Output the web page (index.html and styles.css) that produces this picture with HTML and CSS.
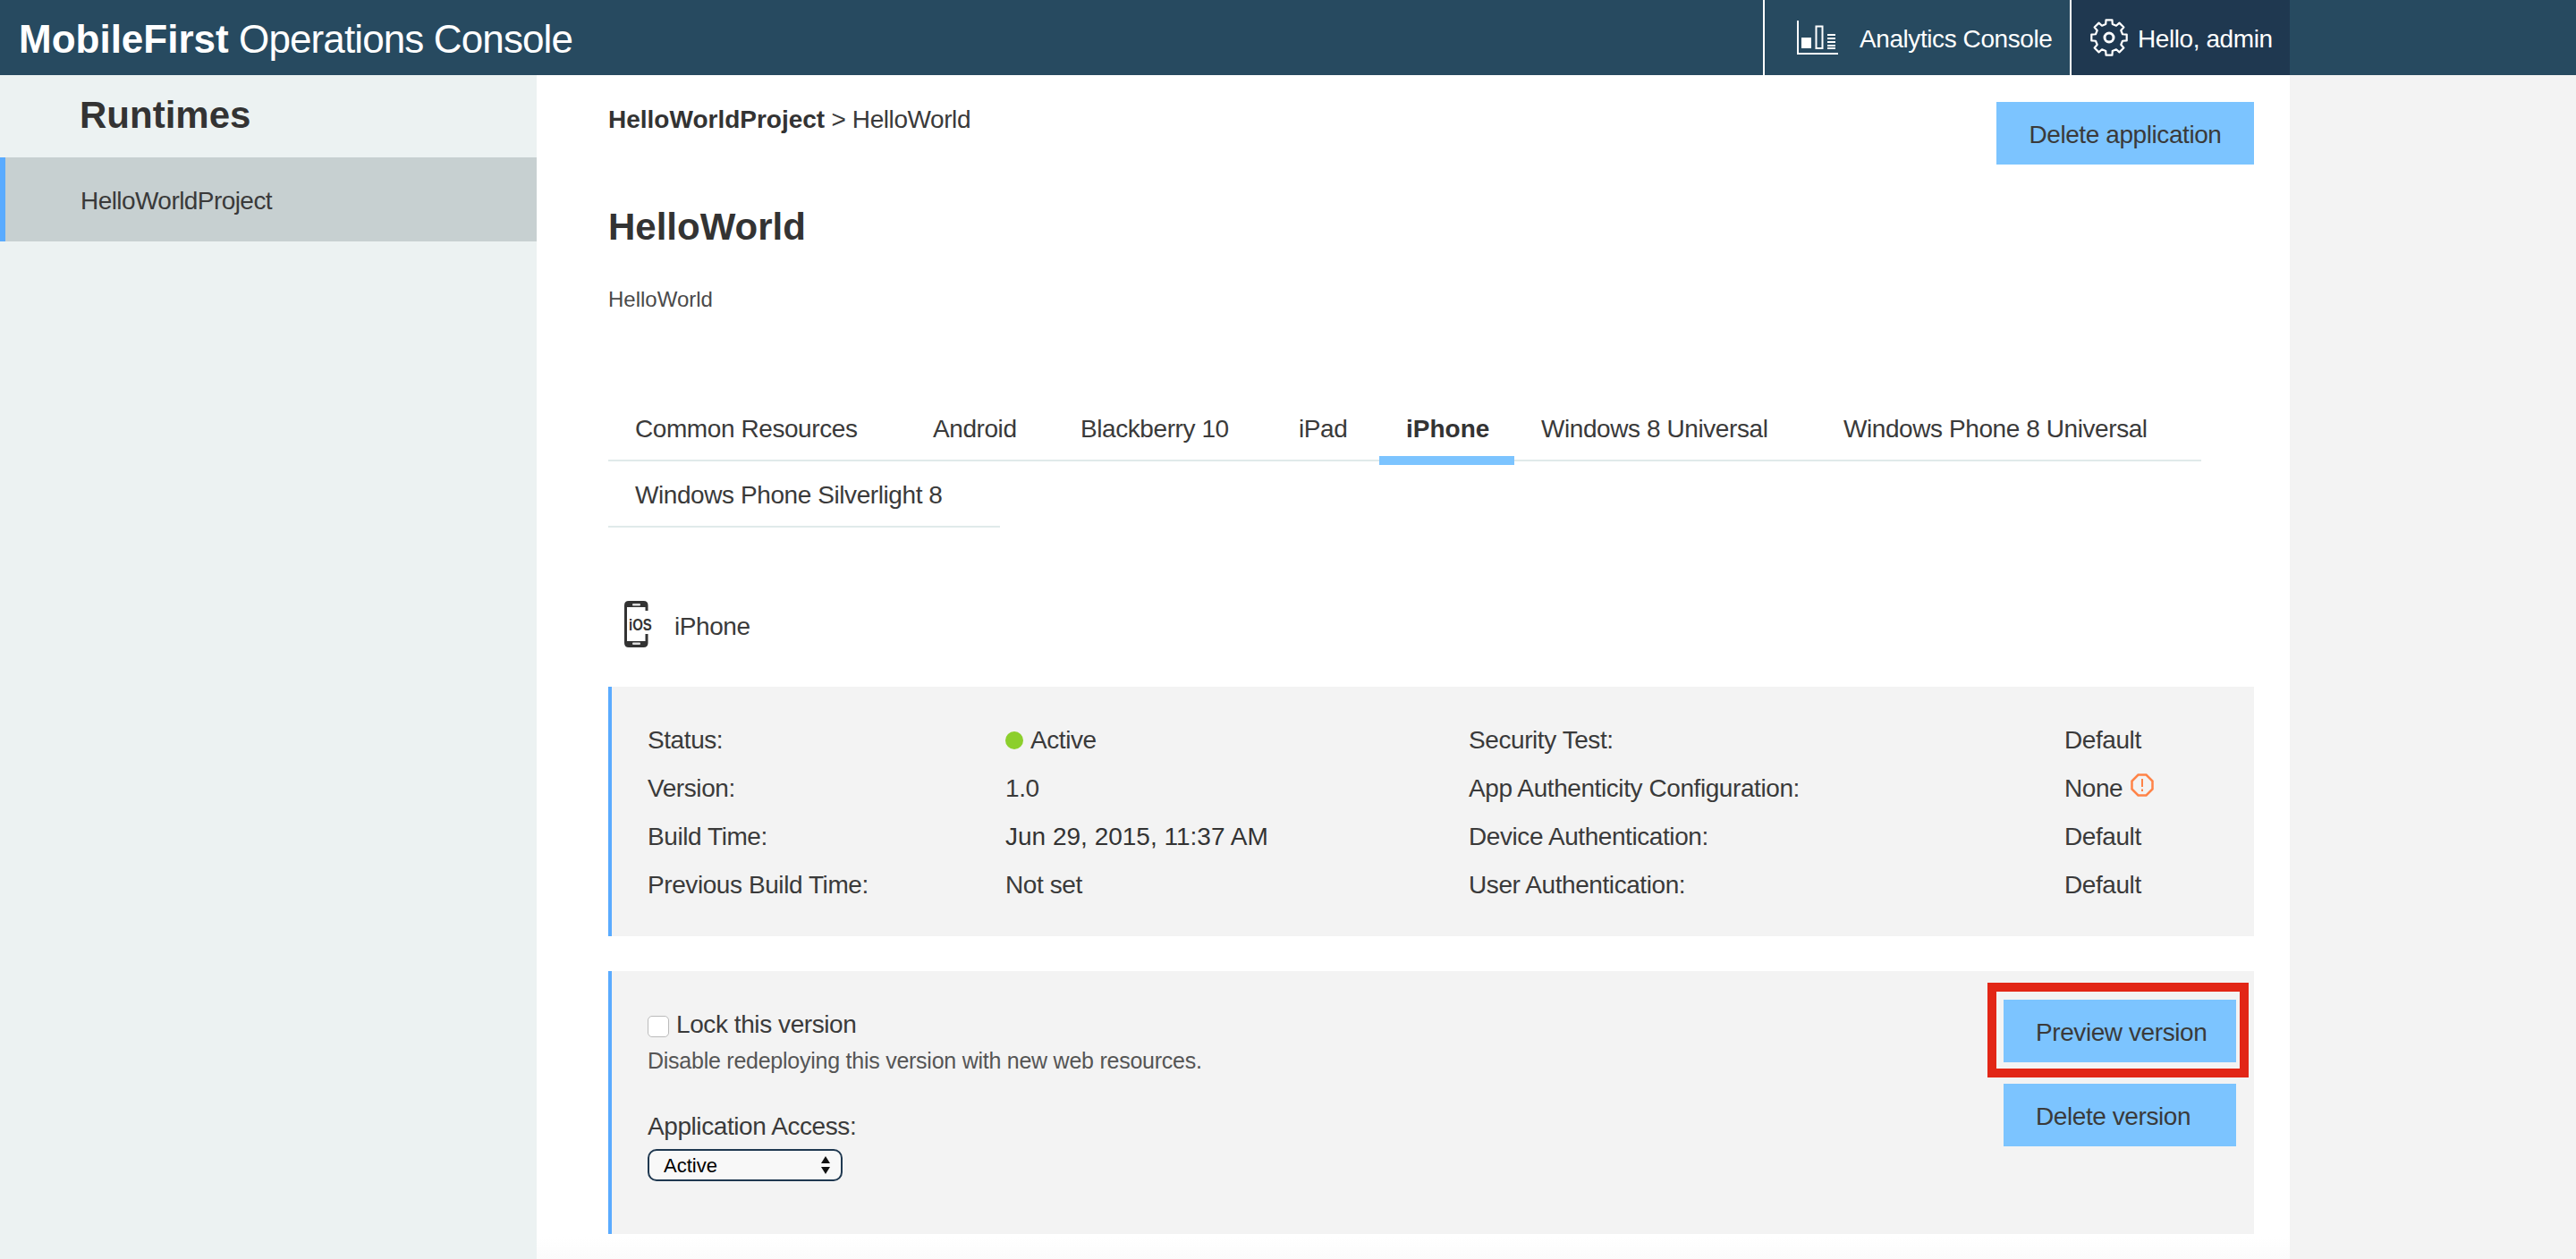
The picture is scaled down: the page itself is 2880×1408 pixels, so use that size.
FILE: index.html
```html
<!DOCTYPE html>
<html>
    <head>
        <title>MobileFirst Operations Console</title>
        <link rel="stylesheet" href="styles.css">
    </head>
    <body>
        <header class="topBar">
            <div class="brand"><b>MobileFirst</b> Operations Console</div>
            <a class="navItem analytics">
                <svg class="analyticsIcon" viewBox="0 0 46 38">
                    <path d="M1 0V37H46" fill="none" stroke="#fff" stroke-width="2"/>
                    <rect x="5" y="19" width="11" height="12" fill="#fff"/>
                    <rect x="21.500" y="6.500" width="7" height="24.500" fill="none" stroke="#fff" stroke-width="2"/>
                    <path d="M34 16H43M34 20H43M34 24H43M34 28H43M34 31H43" stroke="#fff" stroke-width="2"/>
                </svg>
                <span>Analytics Console</span>
            </a>
            <a class="navItem user">
                <svg class="gearIcon" viewBox="0 0 44 42">
                    <polygon fill="none" stroke="#fff" stroke-width="2.200" stroke-linejoin="round" points="18.25,5.96 18.53,1.3 25.47,1.3 25.75,5.96 29.98,7.71 33.47,4.62 38.38,9.53 35.29,13.02 37.04,17.25 41.7,17.53 41.7,24.47 37.04,24.75 35.29,28.98 38.38,32.47 33.47,37.38 29.98,34.29 25.75,36.04 25.47,40.7 18.53,40.7 18.25,36.04 14.02,34.29 10.53,37.38 5.62,32.47 8.71,28.98 6.96,24.75 2.3,24.47 2.3,17.53 6.96,17.25 8.71,13.02 5.62,9.53 10.53,4.62 14.02,7.71"/>
                    <circle cx="22" cy="21" r="5" fill="none" stroke="#fff" stroke-width="3"/>
                </svg>
                <span>Hello, admin</span>
            </a>
        </header>
        <div class="page">
            <aside class="sidebar">
                <h2>Runtimes</h2>
                <div class="sideItem">HelloWorldProject</div>
            </aside>
            <main class="content">
                <div class="crumbRow">
                    <div class="crumbs"><b>HelloWorldProject</b> &gt; HelloWorld</div>
                    <button class="btn deleteApp">Delete application</button>
                </div>
                <h1>HelloWorld</h1>
                <div class="subtitle">HelloWorld</div>

                <div class="tabs firstRow">
                    <div class="tab">Common Resources</div>
                    <div class="tab">Android</div>
                    <div class="tab">Blackberry 10</div>
                    <div class="tab">iPad</div>
                    <div class="tab active">iPhone</div>
                    <div class="tab">Windows 8 Universal</div>
                    <div class="tab">Windows Phone 8 Universal</div>
                </div>
                <div class="tabs secondRow">
                    <div class="tab">Windows Phone Silverlight 8</div>
                </div>

                <div class="platform">
                    <svg class="phoneIcon" viewBox="0 0 33 52">
                        <path d="M25 11V5Q25 1.500 21.500 1.500H5Q1.500 1.500 1.500 5V47Q1.500 50.500 5 50.500H21.500Q25 50.500 25 47V37" fill="none" stroke="#333" stroke-width="3"/>
                        <path d="M2 2H25V7H2ZM2 45H25V50H2Z" fill="#333"/>
                        <rect x="9" y="3" width="9" height="2.500" rx="1" fill="#ddd"/>
                        <rect x="9" y="46.500" width="9" height="2.500" rx="1" fill="#ddd"/>
                        <text class="iosText" x="5" y="27.500" transform="scale(1 1.200)">iOS</text>
                    </svg>
                    <span>iPhone</span>
                </div>

                <section class="panel info">
                    <div>Status:</div>
                    <div class="status"><i class="dot"></i>Active</div>
                    <div>Security Test:</div>
                    <div>Default</div>

                    <div>Version:</div>
                    <div>1.0</div>
                    <div>App Authenticity Configuration:</div>
                    <div class="none">None
                        <svg class="warnIcon" viewBox="0 0 26 26">
                            <polygon points="8.500,1.500 17.500,1.500 24.500,8.500 24.500,17.500 17.500,24.500 8.500,24.500 1.500,17.500 1.500,8.500" fill="none" stroke="#ff8347" stroke-width="2.500"/>
                            <path d="M13 6V15M13 17.500V20" stroke="#ff8347" stroke-width="2"/>
                        </svg>
                    </div>

                    <div>Build Time:</div>
                    <div class="date">Jun 29, 2015, 11:37 AM</div>
                    <div>Device Authentication:</div>
                    <div>Default</div>

                    <div>Previous Build Time:</div>
                    <div>Not set</div>
                    <div>User Authentication:</div>
                    <div>Default</div>
                </section>

                <section class="panel version">
                    <div class="versionForm">
                        <label class="lockRow"><input type="checkbox">Lock this version</label>
                        <div class="help">Disable redeploying this version with new web resources.</div>
                        <div class="accessLabel">Application Access:</div>
                        <div class="selectWrap">
                            <select>
                                <option>Active</option>
                            </select>
                        </div>
                    </div>
                    <div class="versionBtns">
                        <button class="btn">Preview version</button>
                        <button class="btn">Delete version</button>
                    </div>
                    <div class="highlight"></div>
                </section>
            </main>
            <div class="gutter"></div>
        </div>
    </body>
</html>
```

FILE: styles.css
```css
html {
    overflow: hidden;
}

body {
    margin: 0;
    height: 1408px;
    overflow: hidden;
    font-family: "Liberation Sans", Arial, sans-serif;
    font-size: 28px;
    line-height: 40px;
    letter-spacing: -0.015em;
    color: #3a3a3a;
    background-color: #fff;
}

b,
h1,
h2,
.tab.active,
.date {
    letter-spacing: 0;
    color: #333;
}

/* top bar */
.topBar {
    display: flex;
    align-items: stretch;
    height: 84px;
    padding-right: 320px;
    background-color: #274a60;
    color: #fff;
}

.brand {
    flex: 1;
    padding-left: 21px;
    font-size: 44px;
    line-height: 88px;
    letter-spacing: -0.02em;
}

.brand b {
    color: #fff;
}

.navItem {
    display: flex;
    align-items: center;
    box-sizing: border-box;
    border-left: 2px solid #fff;
}

.navItem span {
    margin-top: 3px;
}

.analytics {
    width: 343px;
    padding-left: 36px;
}

.analyticsIcon {
    width: 46px;
    height: 38px;
    margin-right: 24px;
}

.user {
    width: 246px;
    padding-left: 20px;
    background-color: #1f3850;
}

.gearIcon {
    width: 44px;
    height: 42px;
    margin-right: 10px;
}

/* layout */
.page {
    display: flex;
    height: 1324px;
}

.sidebar {
    width: 600px;
    background-color: #ecf2f2;
}

.sidebar h2 {
    margin: 0;
    padding: 21px 0 0 89px;
    height: 71px;
    font-size: 42px;
    line-height: 48px;
}

.sideItem {
    height: 90px;
    padding: 4px 0 0 84px;
    border-left: 6px solid #5aabff;
    background-color: #c7d0d1;
    line-height: 90px;
    letter-spacing: -0.02em;
}

.content {
    width: 1840px;
    padding: 28px 40px 0 80px;
    background: linear-gradient(#fff 1300px, #fbfbfb);
}

.gutter {
    flex: 1;
    background-color: #f3f3f3;
}

/* heading block */
.crumbRow {
    display: flex;
    justify-content: space-between;
    align-items: flex-start;
    height: 72px;
}

.crumbs {
    padding-top: 2px;
}

.btn {
    display: block;
    width: 260px;
    height: 70px;
    padding: 3px 0 0;
    border: 0;
    background-color: #7cc4ff;
    color: #3a3a3a;
    font-family: inherit;
    font-size: 28px;
    letter-spacing: inherit;
}

.deleteApp {
    width: 288px;
    margin-top: 2px;
}

h1 {
    margin: 46px 0 0;
    font-size: 42px;
    line-height: 48px;
}

.subtitle {
    margin-top: 42px;
    font-size: 24px;
    line-height: 30px;
    letter-spacing: 0;
    color: #4a4a4a;
}

/* tabs */
.tabs {
    display: grid;
    border-bottom: 2px solid #e0eaea;
}

.firstRow {
    margin-top: 92px;
    width: 1781px;
    grid-template-columns: 333px 165px 244px 120px 151px 338px 430px;
}

.secondRow {
    width: 438px;
}

.tab {
    position: relative;
    padding: 4px 0 0 30px;
    line-height: 68px;
    white-space: nowrap;
}

.tab.active {
    font-weight: bold;
}

.tab.active::after {
    content: "";
    position: absolute;
    left: 0;
    right: 0;
    bottom: -6px;
    height: 10px;
    background-color: #7cc4ff;
}

/* platform */
.platform {
    display: flex;
    align-items: center;
    height: 52px;
    margin-top: 82px;
    padding-left: 18px;
}

.platform span {
    margin-top: 5px;
}

.phoneIcon {
    width: 33px;
    height: 52px;
    margin-right: 23px;
}

.iosText {
    font-size: 15px;
    font-weight: bold;
    letter-spacing: 0;
    fill: #333;
}

/* panels */
.panel {
    box-sizing: border-box;
    border-left: 4px solid #5aabff;
    background-color: #f3f3f3;
}

.info {
    display: grid;
    grid-template-columns: 400px 518px 666px 1fr;
    grid-auto-rows: 54px;
    align-items: center;
    height: 279px;
    margin-top: 44px;
    padding: 33px 0 0 40px;
}

.status {
    display: flex;
    align-items: center;
}

.dot {
    width: 20px;
    height: 20px;
    margin-right: 8px;
    border-radius: 50%;
    background-color: #8ccf2c;
}

.none {
    display: flex;
    align-items: center;
}

.warnIcon {
    width: 26px;
    height: 26px;
    margin: -8px 0 0 9px;
}

.version {
    position: relative;
    display: flex;
    justify-content: space-between;
    height: 294px;
    margin-top: 39px;
    padding: 32px 20px 0 40px;
}

.lockRow {
    display: flex;
    align-items: center;
    margin-top: 8px;
}

.lockRow input {
    appearance: none;
    width: 24px;
    height: 24px;
    margin: 3px 8px 0 0;
    border: 1px solid #bbb;
    border-radius: 5px;
    background-color: #fff;
}

.help {
    margin-top: 2px;
    font-size: 25px;
    line-height: 36px;
    letter-spacing: -0.01em;
    color: #555;
}

.accessLabel {
    margin-top: 36px;
}

.selectWrap {
    position: relative;
    width: 218px;
    margin-top: 5px;
}

.selectWrap select {
    appearance: none;
    display: block;
    box-sizing: border-box;
    width: 218px;
    height: 36px;
    padding: 0 0 0 16px;
    border: 2px solid #1f3850;
    border-radius: 10px;
    background-color: #f8f8f8;
    color: #000;
    font-family: inherit;
    font-size: 22px;
}

.selectWrap::before,
.selectWrap::after {
    content: "";
    position: absolute;
    right: 14px;
    border-left: 5px solid transparent;
    border-right: 5px solid transparent;
}

.selectWrap::before {
    top: 8px;
    border-bottom: 8px solid #111;
}

.selectWrap::after {
    bottom: 8px;
    border-top: 8px solid #111;
}

.versionBtns {
    display: flex;
    flex-direction: column;
    gap: 24px;
}

.versionBtns .btn {
    padding-left: 36px;
    text-align: left;
}

/* red annotation round the preview button */
.highlight {
    position: absolute;
    top: 13px;
    right: 6px;
    box-sizing: border-box;
    width: 292px;
    height: 106px;
    border: 10px solid #e22616;
}
```
